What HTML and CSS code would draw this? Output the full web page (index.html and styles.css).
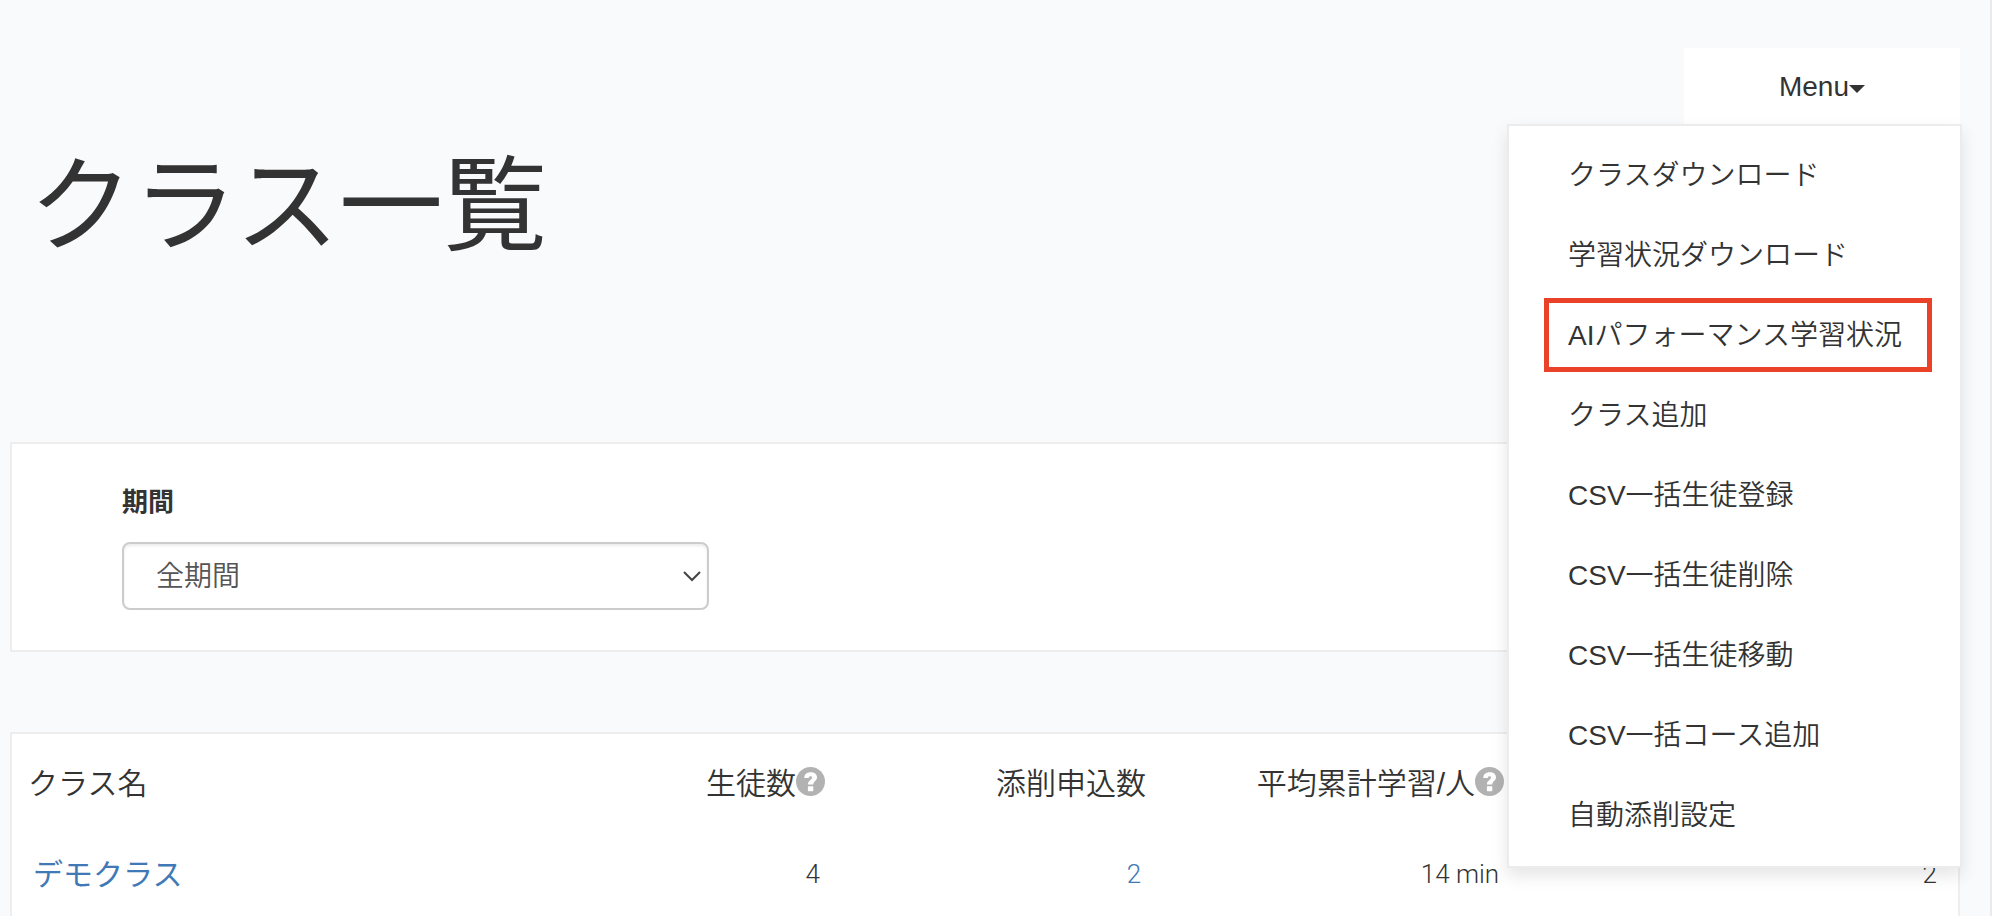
FILE: index.html
```html
<!DOCTYPE html>
<html lang="ja">
<head>
  <meta charset="UTF-8">
  <meta name="viewport" content="width=device-width, initial-scale=1.0">
  <title>クラス一覧</title>
  <link rel="stylesheet" href="styles.css">
</head>
<body>
  <main class="page">
    <header class="page-header">
      <h1 class="title">クラス一覧</h1>
      <nav class="menu">
        <button class="menu-toggle" type="button" aria-expanded="true">Menu<span class="caret"></span></button>
        <ul class="menu-list">
          <li><a href="#">クラスダウンロード</a></li>
          <li><a href="#">学習状況ダウンロード</a></li>
          <li><a class="highlight" href="#">AIパフォーマンス学習状況</a></li>
          <li><a href="#">クラス追加</a></li>
          <li><a href="#">CSV一括生徒登録</a></li>
          <li><a href="#">CSV一括生徒削除</a></li>
          <li><a href="#">CSV一括生徒移動</a></li>
          <li><a href="#">CSV一括コース追加</a></li>
          <li><a href="#">自動添削設定</a></li>
        </ul>
      </nav>
    </header>

    <section class="panel filter">
      <label for="period">期間</label>
      <div class="select-wrap">
        <select id="period">
          <option>全期間</option>
        </select>
        <svg class="chevron" viewBox="0 0 18 12" width="18" height="12"><path d="M1 2l8 8 8-8" fill="none" stroke="#444" stroke-width="2"/></svg>
      </div>
    </section>

    <section class="panel">
      <table class="class-table">
        <thead>
          <tr>
            <th class="col-name">クラス名</th>
            <th class="col-students">生徒数<svg class="help" viewBox="0 0 28 28"><circle cx="14" cy="14" r="14" fill="#b2b2b2"/><path d="M8 10.500C8 7 10.500 5 14.200 5C17.800 5 20.300 6.900 20.300 9.800C20.300 13.500 16.700 13.600 16.700 16.800H11.500C11.500 12.800 15.400 12.600 15.400 10.300C15.400 9.400 14.900 9 14.100 9C13 9 12.500 9.600 12.400 10.700Z" fill="#fff"/><rect x="11.500" y="18.500" width="5.200" height="4.800" rx=".6" fill="#fff"/></svg></th>
            <th class="col-reviews">添削申込数</th>
            <th class="col-time">平均累計学習/人<svg class="help" viewBox="0 0 28 28"><circle cx="14" cy="14" r="14" fill="#b2b2b2"/><path d="M8 10.500C8 7 10.500 5 14.200 5C17.800 5 20.300 6.900 20.300 9.800C20.300 13.500 16.700 13.600 16.700 16.800H11.500C11.500 12.800 15.400 12.600 15.400 10.300C15.400 9.400 14.900 9 14.100 9C13 9 12.500 9.600 12.400 10.700Z" fill="#fff"/><rect x="11.500" y="18.500" width="5.200" height="4.800" rx=".6" fill="#fff"/></svg></th>
            <th></th>
          </tr>
        </thead>
        <tbody>
          <tr>
            <td><a href="#">デモクラス</a></td>
            <td>4</td>
            <td><a href="#">2</a></td>
            <td>14 min</td>
            <td>2</td>
          </tr>
        </tbody>
      </table>
    </section>
  </main>
</body>
</html>
```

FILE: styles.css
```css
* {
  box-sizing: border-box;
}
body {
  margin: 0;
  min-height: 100vh;
  background: #f9fafc;
  border-right: 2px solid #e8eaed;
  color: #333;
  font-family: "Liberation Sans", "Noto Sans CJK JP", sans-serif;
  font-size: 28px;
  overflow: hidden;
}
a {
  color: #4179b6;
  text-decoration: none;
}

.page {
  padding: 48px 30px 0 10px;
}
.page-header {
  display: flex;
  justify-content: space-between;
  align-items: flex-start;
  height: 394px;
}
.title {
  margin: 84px 0 0 19px;
  font-size: 104px;
  font-weight: 400;
  line-height: 150px;
}

/* Menu */
.menu {
  position: relative;
  width: 276px;
}
.menu-toggle {
  display: flex;
  justify-content: center;
  align-items: center;
  width: 100%;
  height: 76px;
  padding: 2px 0 0;
  border: 0;
  background: #fff;
  color: #333;
  font: inherit;
}
.caret {
  margin-top: 4px;
  border-top: 8px solid #333;
  border-left: 8px solid transparent;
  border-right: 8px solid transparent;
}
.menu-list {
  position: absolute;
  top: 76px;
  right: -2px;
  z-index: 10;
  width: 455px;
  margin: 0;
  padding: 10px 0;
  list-style: none;
  background: #fff;
  border: 2px solid #ececec;
  box-shadow: 0 8px 16px rgba(0, 0, 0, 0.1);
}
.menu-list li {
  padding: 2px 28px 4px 35px;
}
.menu-list a {
  display: block;
  padding: 2px 19px 0;
  border: 5px solid transparent;
  color: #333;
  font-weight: 350;
  line-height: 62px;
  white-space: nowrap;
}
.menu-list .highlight {
  border-color: #e94228;
}

.panel {
  background: #fff;
  border: 2px solid #eee;
}

/* Period filter */
.filter {
  margin-bottom: 80px;
  padding: 38px 110px 40px;
}
.filter label {
  display: block;
  margin-bottom: 20px;
  font-size: 26px;
  font-weight: 700;
  line-height: 40px;
}
.select-wrap {
  position: relative;
  width: 34%;
}
.filter select {
  display: block;
  width: 100%;
  height: 68px;
  padding: 0 32px;
  appearance: none;
  background: #fff;
  border: 2px solid #ccc;
  border-radius: 8px;
  box-shadow: inset 0 2px 3px rgba(0, 0, 0, 0.08);
  color: #555;
  font: inherit;
  font-weight: 350;
}
.chevron {
  position: absolute;
  right: 8px;
  top: 28px;
  pointer-events: none;
}

/* Class table */
.class-table {
  width: 100%;
  table-layout: fixed;
  border-collapse: collapse;
}
.class-table th,
.class-table td {
  height: 92px;
  padding: 2px 16px 0;
  text-align: right;
  font-weight: 350;
  white-space: nowrap;
}
.class-table th {
  font-size: 30px;
}
.class-table td {
  padding: 4px 21px 0;
  font-family: Roboto, "Noto Sans CJK JP", sans-serif;
  font-size: 26px;
  font-weight: 300;
}
.class-table th:first-child,
.class-table td:first-child {
  text-align: left;
}
.class-table td:first-child {
  padding-top: 0;
  font-size: 30px;
  font-weight: 400;
}
.col-name {
  width: 26%;
}
.col-students {
  width: 16.6%;
}
.col-reviews {
  width: 16.5%;
}
.col-time {
  width: 18.4%;
}
.help {
  width: 29px;
  height: 29px;
  vertical-align: -2px;
}
```
